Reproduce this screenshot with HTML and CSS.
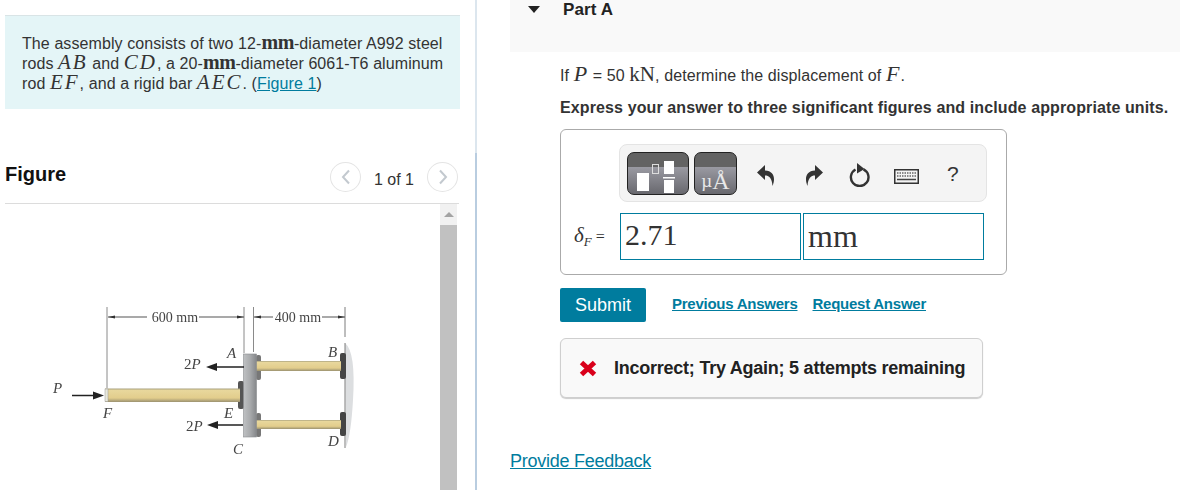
FILE: index.html
```html
<!DOCTYPE html>
<html lang="en">
<head>
<meta charset="utf-8">
<title>Part A</title>
<link rel="stylesheet" href="styles.css">
</head>
<body>
<div class="page">
  <section class="left">
    <div class="intro">
      The assembly consists of two 12-<span class="mr">mm</span>-diameter A992 steel<br>
      rods <i class="mi">AB</i> and <i class="mi">CD</i>, a 20-<span class="mr">mm</span>-diameter 6061-T6 aluminum<br>
      rod <i class="mi">EF</i>, and a rigid bar <i class="mi">AEC</i>. (<a href="#" class="link">Figure 1</a>)
    </div>
    <div class="fig-head">
      <h2 class="fig-title">Figure</h2>
      <div class="pager">
        <span class="circle"><svg width="10" height="16" viewBox="0 0 10 16"><path d="M8 1.500L2 8l6 6.500" fill="none" stroke="#c3c9cf" stroke-width="2"/></svg></span>
        <span class="pager-text">1 of 1</span>
        <span class="circle"><svg width="10" height="16" viewBox="0 0 10 16"><path d="M2 1.500L8 8l-6 6.500" fill="none" stroke="#c3c9cf" stroke-width="2"/></svg></span>
      </div>
    </div>
    <div class="fig-body">
      <div class="fig-canvas">
        <svg class="diagram" width="330" height="200" viewBox="0 0 330 200">
          <defs>
            <linearGradient id="rod" x1="0" y1="0" x2="0" y2="1">
              <stop offset="0" stop-color="#a9a27f"/><stop offset=".15" stop-color="#e8d79c"/><stop offset=".7" stop-color="#e2cd8c"/><stop offset="1" stop-color="#9b9270"/>
            </linearGradient>
            <linearGradient id="plate" x1="0" y1="0" x2="1" y2="0">
              <stop offset="0" stop-color="#bfc1c3"/><stop offset=".5" stop-color="#a9abad"/><stop offset="1" stop-color="#85878a"/>
            </linearGradient>
            <filter id="soft"><feGaussianBlur stdDeviation=".4"/></filter>
          </defs>
          <g filter="url(#soft)">
            <path d="M305 53Q316 62 313 110 311 145 306 157Z" fill="#dcdee0"/>
            <path d="M305 17V47M305 53V158" stroke="#7c7c7c" fill="none"/>
            <path d="M67 17V98M204 17V63M213.500 17V62" stroke="#8a8a8a" fill="none"/>
            <path d="M68 27H107M159 27H204M214 27H233M282 27H305" stroke="#555" fill="none"/>
            <path d="M68 27l7-1.500v3zM204 27l-7-1.500v3zM214 27l7-1.500v3zM305 27l-7-1.500v3z" fill="#333"/>
            <rect x="216" y="65" width="5" height="25" fill="#777" rx="2"/>
            <rect x="216" y="123" width="5" height="24" fill="#777" rx="2"/>
            <rect x="198" y="91" width="6" height="28" fill="#555" rx="2"/>
            <rect x="300" y="63" width="6" height="26" fill="#444" rx="2"/>
            <rect x="300" y="122" width="6" height="24" fill="#444" rx="2"/>
            <rect x="216" y="71" width="85" height="10" fill="url(#rod)"/>
            <rect x="216" y="130" width="85" height="9" fill="url(#rod)"/>
            <rect x="65" y="98.500" width="135" height="13.500" fill="url(#rod)"/>
            <rect x="65" y="99" width="3" height="12.500" fill="#e8e8dc" stroke="#999" stroke-width=".5"/>
            <rect x="203.500" y="64" width="13" height="83" fill="url(#plate)" stroke="#8b8d90" stroke-width=".6"/>
            <path d="M204 77H171M203 135H172M32 105.500H59" stroke="#222" stroke-width="1.500"/>
            <path d="M166 77l11-4v8zM167 135l11-4v8zM64 105.500l-11-4v8z" fill="#222"/>
          </g>
          <g class="dg-text">
            <text x="135" y="32" text-anchor="middle" class="dg-dim">600 mm</text>
            <text x="258" y="32" text-anchor="middle" class="dg-dim">400 mm</text>
            <text x="144" y="79" class="dg-lab">2<tspan class="dg-it">P</tspan></text>
            <text x="146" y="141" class="dg-lab">2<tspan class="dg-it">P</tspan></text>
            <text x="13" y="103" class="dg-lab dg-it">P</text>
            <text x="63" y="128" class="dg-lab dg-it">F</text>
            <text x="187" y="68" class="dg-lab dg-it">A</text>
            <text x="288" y="67" class="dg-lab dg-it">B</text>
            <text x="193" y="164" class="dg-lab dg-it">C</text>
            <text x="288" y="156" class="dg-lab dg-it">D</text>
            <text x="184" y="128" class="dg-lab dg-it">E</text>
          </g>
        </svg>
      </div>
      <div class="scrollbar">
        <div class="scroll-up"><span class="scroll-arrow"></span></div>
        <div class="scroll-thumb"></div>
      </div>
    </div>
  </section>

  <div class="divider"></div>

  <main class="right">
    <header class="part-head">
      <span class="caret"></span>
      <h2 class="part-title">Part A</h2>
    </header>
    <div class="part-body">
      <p class="question">If <i class="mi-s">P</i> = 50 <span class="mr-s">kN</span>, determine the displacement of <i class="mi-s">F</i>.</p>
      <p class="instr">Express your answer to three significant figures and include appropriate units.</p>

      <div class="answer">
        <div class="toolbar">
          <div class="tool tool-frac">
            <svg class="tool-svg" width="60" height="41" viewBox="0 0 60 41">
              <rect x="9" y="20" width="12" height="18" fill="#fff"/>
              <rect x="24.500" y="11.500" width="6" height="9" fill="none" stroke="#ddd" stroke-width="1"/>
              <rect x="36" y="8" width="10" height="13" fill="#fff"/>
              <rect x="35" y="24" width="12" height="1.500" fill="#fff"/>
              <rect x="36" y="27" width="10" height="13" fill="#fff"/>
            </svg>
          </div>
          <div class="tool tool-unit"><span class="mu">µ</span><span class="ang">Å</span></div>
          <svg class="ic ic-undo" width="18" height="21" viewBox="0 0 18 21"><path d="M8 0L0 7.500 8 15V10.500C12 10.500 15 13 15.500 21 18.500 14 17.500 5.800 8 5.500Z" fill="#333"/></svg>
          <svg class="ic ic-redo" width="18" height="21" viewBox="0 0 18 21"><path d="M10 0l8 7.500-8 7.500V10.500C6 10.500 3 13 2.500 21-.5 14 .5 5.800 10 5.500Z" fill="#333"/></svg>
          <svg class="ic ic-refresh" width="21" height="24" viewBox="0 0 21 24"><path d="M6.500 6.500A8.800 8.800 0 1 0 14.500 6.300" fill="none" stroke="#333" stroke-width="2.400"/><path d="M8 0l7.500 6L8 10.500z" fill="#333"/></svg>
          <svg class="ic ic-kbd" width="25" height="15" viewBox="0 0 25 15">
            <rect x=".75" y=".75" width="23.500" height="13.500" fill="#f4f4f4" stroke="#333" stroke-width="1.500"/>
            <path d="M3 4h19M3 7h19" stroke="#666" stroke-width="1.300" stroke-dasharray="1.500 1"/>
            <path d="M3 10.500h19" stroke="#444" stroke-width="1.500"/>
          </svg>
          <span class="help">?</span>
        </div>
        <div class="answer-row">
          <span class="symbol"><i class="delta">δ</i><sub class="delta-sub">F</sub> =</span>
          <div class="field">2.71</div>
          <div class="field field-unit">mm</div>
        </div>
      </div>

      <div class="actions">
        <button class="submit" type="button">Submit</button>
        <a href="#" class="link link-b">Previous Answers</a>
        <a href="#" class="link link-b">Request Answer</a>
      </div>

      <div class="feedback">
        <svg class="xmark" width="18" height="17" viewBox="0 0 18 17"><path d="M2.500 2.500L15.500 14.500M15.500 2.500L2.500 14.500" stroke="#d9001b" stroke-width="5" fill="none"/></svg>
        <span>Incorrect; Try Again; 5 attempts remaining</span>
      </div>
    </div>
    <a href="#" class="link provide">Provide Feedback</a>
  </main>
</div>
</body>
</html>
```
FILE: styles.css
```css
* { box-sizing: border-box; }
html, body { margin: 0; height: 490px; overflow: hidden; background: #fff; }
body { font-family: "Liberation Sans", Arial, sans-serif; font-size: 16px; color: #333; }
.page { display: flex; height: 490px; }

.left { width: 475px; flex: none; padding-top: 15px; display: flex; flex-direction: column; }
.divider { width: 2px; flex: none; background: linear-gradient(#dce6ee 153px, #b9cde0 153px); }
.right { flex: 1; min-width: 0; padding-left: 33px; display: flex; flex-direction: column; }

.intro { margin-left: 5px; width: 455px; height: 94px; background: #e4f5f7; border-top: 1px solid #d9e4e6; padding: 18px 0 0 17px; line-height: 20px; white-space: nowrap; letter-spacing: .09px; }
.mi { font-family: "Liberation Serif", serif; font-size: 21px; letter-spacing: 2px; color: #333; line-height: 0; }
.mr { font-family: "Liberation Serif", serif; font-size: 20px; font-weight: 700; line-height: 0; letter-spacing: -.4px; }
.link { color: #007c9e; text-decoration: underline; }

.fig-head { margin: 51px 16px 0 5px; height: 44px; border-bottom: 1px solid #dcdcdc; display: flex; justify-content: space-between; }
.fig-title { margin: 0; font-size: 20px; line-height: 28px; font-weight: 700; color: #111; }
.pager { display: flex; align-items: flex-start; padding: 2px 1px 0 0; }
.circle { width: 31px; height: 30px; border: 1px solid #e4e4e4; border-radius: 50%; display: flex; align-items: center; justify-content: center; }
.pager-text { width: 66px; text-align: center; line-height: 36px; color: #333; }

.fig-body { flex: 1; min-height: 0; display: flex; margin-left: 5px; width: 452px; }
.fig-canvas { flex: 1; min-width: 0; padding: 86px 0 0 35px; }
.diagram { display: block; }
.dg-text { filter: blur(.3px); }
.dg-text text { font-family: "Liberation Serif", serif; fill: #444; }
.dg-dim { font-size: 14px; }
.dg-lab { font-size: 15px; }
.dg-it { font-style: italic; }

.scrollbar { width: 17px; flex: none; background: #f1f1f1; display: flex; flex-direction: column; }
.scroll-up { height: 21px; display: flex; align-items: center; justify-content: center; }
.scroll-arrow { width: 0; height: 0; border: 5px solid transparent; border-top: 0; border-bottom: 5px solid #a3a3a3; }
.scroll-thumb { flex: 1; background: #c1c1c1; }

.part-head { height: 52px; background: #f9f9f9; display: flex; align-items: flex-start; }
.caret { width: 0; height: 0; margin: 6px 0 0 18px; border: 6.500px solid transparent; border-top: 7px solid #222; border-bottom: 0; }
.part-title { margin: 0 0 0 23px; font-size: 17px; line-height: 19px; font-weight: 700; color: #222; letter-spacing: .1px; }

.part-body { padding-left: 50px; }
.question { margin: 14px 0 0; line-height: 20px; letter-spacing: .1px; }
.mi-s { font-family: "Liberation Serif", serif; font-size: 22px; line-height: 0; letter-spacing: 1px; }
.mr-s { font-family: "Liberation Serif", serif; font-size: 21px; line-height: 0; }
.instr { margin: 12px 0 0; font-weight: 700; line-height: 20px; white-space: nowrap; letter-spacing: .115px; }

.answer { margin-top: 11px; width: 447px; height: 146px; border: 1px solid #aaa; border-radius: 6px; padding: 14px 0 0 58px; }
.toolbar { width: 368px; height: 58px; background: #f4f4f4; border: 1px solid #e4e4e4; border-radius: 8px; padding-left: 7px; display: flex; align-items: center; }
.tool { height: 43px; border: 1px solid #222; border-radius: 7px; background: linear-gradient(#636363 0, #636363 14px, #9a9aa2 14px, #68686e 100%); flex: none; }
.tool-svg { display: block; }
.tool-frac { width: 62px; }
.tool-unit { width: 43px; margin-left: 5px; font-family: "Liberation Serif", serif; color: #e8e8e8; display: flex; align-items: flex-end; justify-content: center; line-height: 26px; }
.mu { font-size: 19px; }
.ang { font-size: 24px; }
.ic { flex: none; margin-top: 4px; }
.ic-undo { margin-left: 20px; }
.ic-redo { margin-left: 30px; }
.ic-refresh { margin-left: 26px; }
.ic-kbd { margin-left: 24px; margin-top: 6px; }
.help { margin-left: 28px; margin-top: 2px; font-size: 21px; color: #333; }

.answer-row { display: flex; align-items: center; margin-top: 11px; margin-left: -45px; }
.symbol { width: 46px; font-family: "Liberation Serif", serif; font-size: 16px; white-space: nowrap; }
.delta { font-size: 21px; }
.delta-sub { font-style: italic; font-size: 13px; }
.field { width: 181px; height: 47px; border: 1px solid #007c9e; font-family: "Liberation Serif", serif; font-size: 30px; line-height: 42px; padding-left: 4px; color: #333; }
.field-unit { margin-left: 2px; font-size: 32px; line-height: 44px; }

.actions { margin-top: 13px; display: flex; align-items: center; }
.submit { width: 86px; height: 34px; border: 0; border-radius: 2px; background: #007c9e; color: #fff; font: 18px "Liberation Sans", Arial, sans-serif; padding: 0; }
.link-b { font-size: 15px; font-weight: 700; letter-spacing: -.25px; margin-bottom: 3px; }
.actions .link-b { margin-left: 26px; }
.actions .link-b + .link-b { margin-left: 15px; }

.feedback { margin-top: 16px; width: 423px; height: 60px; background: #f9f9f9; border: 1px solid #cfcfcf; border-radius: 6px; box-shadow: 0 1px 1px #ccc; display: flex; align-items: center; padding-left: 18px; gap: 17px; font-size: 18px; font-weight: 700; color: #222; white-space: nowrap; letter-spacing: -.24px; }
.xmark { flex: none; }
.provide { margin-top: 53px; font-size: 18px; line-height: 21px; align-self: flex-start; letter-spacing: -.25px; }
```
